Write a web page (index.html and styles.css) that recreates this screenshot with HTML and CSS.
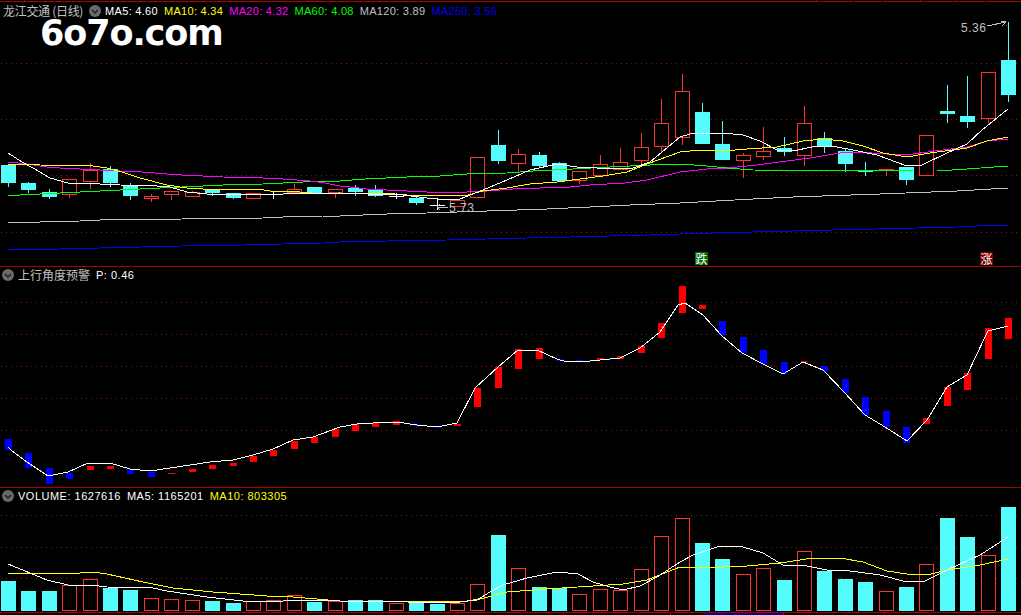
FILE: index.html
```html
<!DOCTYPE html>
<html lang="zh-CN">
<head>
<meta charset="utf-8">
<title>龙江交通 (日线)</title>
<link rel="stylesheet" href="styles.css">
</head>
<body>
<main class="terminal">
  <section class="pane pane-price">
    <svg class="plot" id="price" viewBox="0 0 1021 267"></svg>
    <div class="legend legend-price">
      <span class="title">龙江交通 (日线)</span>
      <svg class="toggle" viewBox="0 0 12 12"><circle cx="6" cy="6" r="6"/><path d="M3 5l3 3 3-3"/></svg>
      <span class="c-white">MA5: 4.60</span>
      <span class="c-yellow">MA10: 4.34</span>
      <span class="c-magenta">MA20: 4.32</span>
      <span class="c-green">MA60: 4.08</span>
      <span class="c-gray">MA120: 3.89</span>
      <span class="c-blue">MA250: 3.56</span>
    </div>
    <div class="logo">6o7o.com</div>
    <div class="signal signal-fall">跌</div>
    <div class="signal signal-rise">涨</div>
  </section>
  <section class="pane pane-indicator">
    <svg class="plot" id="indicator" viewBox="0 267 1021 221"></svg>
    <div class="legend legend-sub">
      <svg class="toggle" viewBox="0 0 12 12"><circle cx="6" cy="6" r="6"/><path d="M3 5l3 3 3-3"/></svg>
      <span class="title">上行角度预警</span>
      <span class="c-white">P: 0.46</span>
    </div>
  </section>
  <section class="pane pane-volume">
    <svg class="plot" id="volume" viewBox="0 488 1021 127"></svg>
    <div class="legend legend-sub">
      <svg class="toggle" viewBox="0 0 12 12"><circle cx="6" cy="6" r="6"/><path d="M3 5l3 3 3-3"/></svg>
      <span class="c-white">VOLUME: 1627616</span>
      <span class="c-white">MA5: 1165201</span>
      <span class="c-yellow">MA10: 803305</span>
    </div>
  </section>
</main>
<script src="chart.js"></script>
</body>
</html>
```

FILE: styles.css
```css
* { box-sizing: border-box; }
html, body { margin: 0; height: 100%; background: #000; overflow: hidden; }
.terminal { display: flex; flex-direction: column; width: 1021px; height: 615px; background: #000; }
.pane { position: relative; flex: none; }
.pane-price { height: 267px; }
.pane-indicator { height: 221px; }
.pane-volume { height: 127px; }
.plot { display: block; width: 1021px; height: 100%; shape-rendering: crispEdges; }

.legend {
  position: absolute;
  display: flex;
  align-items: center;
  left: 3px;
  top: 4px;
  height: 14px;
  gap: 6px;
  font: 11px/14px "Liberation Sans", "Noto Sans CJK SC", sans-serif;
  letter-spacing: .3px;
  white-space: nowrap;
}
.legend-sub { left: 2px; top: 1px; letter-spacing: .5px; }
.title { color: #c0c0c0; font: 12px/14px "Noto Sans CJK SC", "Liberation Sans", sans-serif; letter-spacing: 0; }
.legend-price .title { letter-spacing: -.3px; }
.toggle { width: 12px; height: 12px; flex: none; margin-right: -2px; shape-rendering: auto; }
.toggle circle { fill: #6a6a6a; }
.toggle path { fill: none; stroke: #1c1c1c; stroke-width: 1.4; }

.c-white { color: #fff; }
.c-yellow { color: #ff0; }
.c-magenta { color: #f0f; }
.c-green { color: #0f0; }
.c-gray { color: #c0c0c0; }
.c-blue { color: #00f; }

.logo {
  position: absolute;
  left: 40px;
  top: 19px;
  color: #fff;
  font: 700 35px/28px "DejaVu Sans", sans-serif;
  letter-spacing: -1.1px;
}
.signal {
  position: absolute;
  top: 252px;
  width: 13px;
  height: 13px;
  color: #fff;
  font: 12px/13px "Noto Sans CJK SC", sans-serif;
  text-align: center;
}
.signal-fall { left: 695px; background: #006a00; }
.signal-rise { left: 980px; background: #7a0000; }

.grid { stroke: #8a1010; stroke-width: 1; stroke-dasharray: 1 4; }
.axis { fill: #a80000; }
.scroll { fill: #00008a; }
.wick-up { stroke: #ff3232; }
.wick-down { stroke: #54fcfc; }
.wick-flat { stroke: #fff; }
.body-up { fill: #000; stroke: #ff3232; }
.body-down { fill: #54fcfc; }
.body-flat { fill: #fff; }
.bar-up { fill: #f00; }
.bar-down { fill: #00f; }
.line { fill: none; stroke-width: 1; }
.l-white { stroke: #fff; }
.l-yellow { stroke: #ff0; }
.l-magenta { stroke: #f0f; }
.l-green { stroke: #0f0; }
.l-gray { stroke: #c0c0c0; }
.l-blue { stroke: #00f; }
.mark { fill: #c0c0c0; font: 12px "Liberation Sans", sans-serif; letter-spacing: .5px; shape-rendering: auto; }
.mark-arrow { fill: none; stroke: #c0c0c0; stroke-width: 1; }
```

FILE: chart.js
```js
var NS = 'http://www.w3.org/2000/svg';
function el(svg, tag, cls, attrs) {
  var n = document.createElementNS(NS, tag);
  n.setAttribute('class', cls);
  for (var k in attrs) n.setAttribute(k, attrs[k]);
  svg.appendChild(n);
  return n;
}
function left(i) { return Math.round(1 + 20.41 * i); }
function hgrid(svg, ys) {
  ys.forEach(function (y) {
    el(svg, 'line', 'grid', { x1: 1, x2: 1021, y1: y + 0.5, y2: y + 0.5 });
  });
}
function rule(svg, y) { el(svg, 'rect', 'axis', { x: 0, y: y, width: 1021, height: 1 }); }
function lines(svg, defs) {
  defs.forEach(function (d) {
    el(svg, 'polyline', 'line l-' + d[0], { points: d[1] });
  });
}

/* candles: kind (u up, d down, f doji), body top, body bottom, wick top, wick bottom */
var candles = [
['d',165,183,165,187],['d',183,190,182,193],['d',192,197,189,199],['u',179,195,179,198],['u',170,182,163,189],
['d',169,183,166,187],['d',186,196,183,200],['u',196,199,194,202],['u',191,195,191,200],['u',192,197,191,197],
['d',189,193,189,196],['d',193,198,193,199],['u',193,199,193,199],['f',194,195,191,199],['u',189,193,184,193],
['d',187,194,187,194],['u',189,193,189,198],['d',188,192,185,196],['d',190,196,185,197],['f',196,197,193,199],
['d',198,203,195,205],['f',205,206,198,210],['u',200,207,200,207],['u',157,198,157,198],['d',145,161,130,164],
['u',154,164,149,172],['d',155,166,152,168],['d',163,181,162,182],['u',171,181,171,184],['u',164,176,155,176],
['u',162,170,148,170],['u',147,161,133,165],['u',123,147,99,153],['u',91,138,74,145],['d',112,144,103,144],
['d',144,160,121,160],['u',155,161,153,178],['u',151,157,127,160],['d',148,152,137,156],['u',123,156,106,166],
['d',138,146,132,153],['d',151,164,149,172],['d',171,172,162,176],['r',169,171,169,176],['d',167,180,167,185],
['u',135,176,135,176],['d',111,114,85,123],['d',116,122,76,128],['u',72,119,72,123],['d',60,95,22,102]
];

var price = document.getElementById('price');
hgrid(price, [63, 119, 175, 232]);
rule(price, 1);
[24, 816, 850, 885, 920, 955, 990].forEach(function (x) {
  el(price, 'rect', 'axis', { x: x, y: 0, width: 1, height: 1 });
});
rule(price, 266);
candles.forEach(function (c, i) {
  var x = left(i), mid = x + 7.5, kind = c[0];
  var wick = kind === 'u' || kind === 'r' ? 'wick-up' : kind === 'd' ? 'wick-down' : 'wick-flat';
  el(price, 'line', wick, { x1: mid, x2: mid, y1: c[3], y2: c[4] });
  if (kind === 'u') {
    el(price, 'rect', 'body-up', { x: x + 0.5, y: c[1] + 0.5, width: 14, height: c[2] - c[1] - 1 });
  } else if (kind === 'r') {
    el(price, 'rect', 'body-up', { x: x + 0.5, y: c[1] + 0.5, width: 14, height: 1 });
  } else {
    el(price, 'rect', kind === 'd' ? 'body-down' : 'body-flat', { x: x, y: c[1], width: 15, height: c[2] - c[1] });
  }
});
lines(price, [
['blue','8,249 59,249 100,248 142,247 182,246 243,245 283,244 323,243 340,242 387,241 447,240 487,239 527,238 570,237 610,236 650,235 680,234 712,233 753,232 793,231 833,230 877,229 917,228 957,227 977,226 1008,225'],
['gray','8,223 40,222 80,221 100,220 182,219 263,218 283,217 323,216 340,216 387,214 427,213 487,211 547,209 590,207 630,205 680,203 753,199 793,197 880,194 957,191 1008,188'],
['green','8,196 20,195 40,194 60,193 80,192 100,191 120,190 140,189 160,188 182,187 203,186 223,185 263,184 283,183 303,182 323,181 340,181 365,179 407,177 440,176 467,174 507,173 533,171 573,169 610,167 650,165 680,164 707,166 727,168 753,170 913,171 937,171 967,169 1008,166'],
['magenta','8,162 27,164 40,166 47,167 60,168 80,169 100,170 120,171 142,172 167,174 182,175 203,176 223,177 263,178 283,179 310,181 325,183 340,186 350,187 367,189 387,190 407,191 427,192 467,192 487,191 513,189 540,188 570,187 590,185 625,183 647,180 680,172 707,169 727,168 757,165 787,161 810,158 840,153 857,152 887,154 913,154 943,150 967,147 987,141 1008,139'],
['yellow','8,164 40,165 93,166 107,168 122,172 140,178 167,185 187,188 203,189 257,189 270,191 300,192 323,194 340,193 383,193 407,195 447,196 468,195 483,191 507,188 530,184 557,182 580,179 603,176 627,172 647,164 680,152 700,150 723,151 747,149 777,147 803,141 823,139 843,141 863,146 883,153 907,157 930,153 967,148 987,141 1008,137'],
['white','8,153 22,162 33,168 50,178 68,183 100,184 120,185 157,186 170,187 187,192 207,194 257,194 283,194 340,193 367,194 403,195 427,198 447,200 460,199 483,190 507,180 530,170 557,164 577,167 597,168 617,169 633,168 650,162 680,137 690,134 700,133 733,134 743,135 760,141 777,150 793,151 817,146 837,147 853,150 877,155 907,166 922,165 947,153 967,144 982,130 1008,109']
]);
el(price, 'text', 'mark', { x: 449, y: 212 }).textContent = '5.73';
el(price, 'path', 'mark-arrow', { d: 'M448 207H437M440 204l-3 3 3 3' });
el(price, 'text', 'mark', { x: 961, y: 32 }).textContent = '5.36';
el(price, 'path', 'mark-arrow', { d: 'M987 26L1006 22M1001 21l5 1-4 4' });

/* indicator bars: kind, top, bottom */
var bars = [
['d',439,450],['d',453,468],['d',468,484],['d',473,479],['u',466,470],['u',466,469],['d',470,474],['d',472,477],['u',473,474],['u',469,472],
['u',465,469],['u',463,466],['u',456,462],['u',450,456],['u',441,449],['u',437,443],['u',429,437],['u',424,431],['u',423,427],['u',421,425],
['d',424,426],['d',426,428],['u',424,426],['u',388,407],['u',367,388],['u',349,369],['u',348,359],['d',359,361],['d',360,362],['u',358,360],
['u',356,359],['u',346,353],['u',323,338],['u',286,313],['u',305,309],['d',321,335],['d',337,353],['d',350,364],['d',362,374],['u',361,362],
['d',366,371],['d',379,393],['d',397,415],['d',411,427],['d',427,443],['u',418,424],['u',387,406],['u',373,390],['u',328,359],['u',318,339]
];
var ind = document.getElementById('indicator');
hgrid(ind, [302, 334, 366, 398, 430]);
rule(ind, 487);
bars.forEach(function (b, i) {
  el(ind, 'rect', b[0] === 'u' ? 'bar-up' : 'bar-down', { x: left(i) + 4, y: b[1], width: 7, height: b[2] - b[1] });
});
lines(ind, [
['white','8,447 12,451 27,462 48,476 68,472 88,463 110,463 130,469 150,471 170,468 210,462 233,460 253,455 273,449 293,440 313,437 340,427 357,424 373,423 397,422 417,425 437,427 457,423 475,388 498,367 518,350 537,350 557,359 567,362 590,361 620,358 640,348 660,332 678,305 685,303 703,315 722,336 742,353 763,364 783,374 803,362 823,370 845,393 865,415 885,427 907,441 927,420 947,387 967,375 985,337 988,331 1008,326']
]);

/* volume bars: kind, top */
var vols = [
['d',581],['d',591],['d',591],['u',585],['u',579],['d',588],['d',590],['u',598],['u',599],['u',600],
['d',601],['d',603],['u',601],['u',600],['u',595],['d',602],['u',601],['d',600],['d',600],['u',603],
['d',602],['d',604],['u',603],['u',584],['d',535],['u',568],['d',587],['d',588],['u',594],['u',589],
['u',590],['u',569],['u',536],['u',518],['d',543],['d',559],['u',574],['u',568],['d',580],['u',551],
['d',571],['d',579],['d',582],['u',591],['d',587],['u',564],['d',518],['d',537],['u',555],['d',507]
];
var vol = document.getElementById('volume');
hgrid(vol, [515, 547, 578]);
vols.forEach(function (v, i) {
  if (v[0] === 'u') {
    el(vol, 'rect', 'body-up', { x: left(i) + 0.5, y: v[1] + 0.5, width: 14, height: 611 - v[1] - 1 });
  } else {
    el(vol, 'rect', 'body-down', { x: left(i), y: v[1], width: 15, height: 611 - v[1] });
  }
});
lines(vol, [
['yellow','8,573 80,573 93,572 107,574 143,582 173,588 213,592 267,596 293,597 340,601 387,601 460,602 480,599 507,592 547,589 593,586 623,584 647,580 680,567 700,568 747,566 780,563 813,558 840,558 863,562 887,571 907,574 927,575 947,570 980,565 1008,559'],
['white','8,564 30,573 47,580 68,585 90,585 107,587 153,588 167,591 207,597 243,601 283,601 310,600 340,601 383,601 407,602 447,603 460,602 477,600 490,592 503,585 527,578 557,572 578,574 593,582 610,587 623,590 640,586 657,577 680,562 693,555 720,546 743,547 763,553 783,565 807,566 827,570 850,571 880,575 907,582 925,581 947,570 980,555 1008,537']
]);
rule(vol, 612);
[457, 563, 670, 783, 884].forEach(function (x) {
  el(vol, 'rect', 'axis', { x: x, y: 613, width: 1, height: 2 });
});
el(vol, 'rect', 'scroll', { x: 705, y: 613, width: 78, height: 2 });
```
